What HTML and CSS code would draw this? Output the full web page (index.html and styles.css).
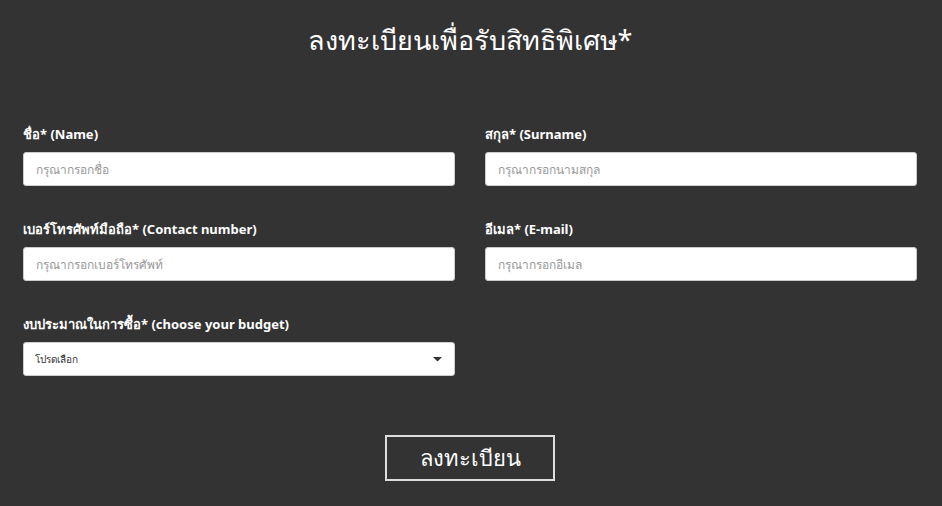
FILE: index.html
```html
<!DOCTYPE html>
<html lang="th">
<head>
<meta charset="utf-8">
<title>ลงทะเบียน</title>
<link rel="stylesheet" href="styles.css">
</head>
<body>
<main class="page">
  <h1 class="title">ลงทะเบียนเพื่อรับสิทธิพิเศษ*</h1>
  <form class="form">
    <div class="grid">
      <div class="field">
        <label class="label">ชื่อ* (Name)</label>
        <input class="input" type="text" placeholder="กรุณากรอกชื่อ">
      </div>
      <div class="field">
        <label class="label">สกุล* (Surname)</label>
        <input class="input" type="text" placeholder="กรุณากรอกนามสกุล">
      </div>
      <div class="field">
        <label class="label">เบอร์โทรศัพท์มือถือ* (Contact number)</label>
        <input class="input" type="text" placeholder="กรุณากรอกเบอร์โทรศัพท์">
      </div>
      <div class="field">
        <label class="label">อีเมล* (E-mail)</label>
        <input class="input" type="text" placeholder="กรุณากรอกอีเมล">
      </div>
      <div class="field">
        <label class="label">งบประมาณในการซื้อ* (choose your budget)</label>
        <div class="select">
          <span class="select-text">โปรดเลือก</span>
          <svg class="caret" width="9" height="5" viewBox="0 0 9 5"><path d="M0 0h9L4.5 4.5z" fill="#333"/></svg>
        </div>
      </div>
    </div>
    <div class="actions">
      <button class="btn" type="button">ลงทะเบียน</button>
    </div>
  </form>
</main>
</body>
</html>
```
FILE: styles.css
```css
html, body {
  margin: 0;
  padding: 0;
  background: #333333;
}
body {
  font-family: "Noto Sans", "DejaVu Sans", sans-serif;
  color: #ffffff;
  height: 506px;
  overflow: hidden;
}
.page {
  width: 894px;
  margin: 0 0 0 23px;
}
.title {
  margin: 0;
  padding-top: 18px;
  height: 44px;
  font-size: 27px;
  font-weight: 400;
  line-height: 44px;
  text-align: center;
}
.form {
  margin-top: 62px;
}
.grid {
  display: grid;
  grid-template-columns: 432px 432px;
  column-gap: 30px;
  row-gap: 33px;
}
.field {
  display: flex;
  flex-direction: column;
}
.label {
  font-size: 13px;
  font-weight: 700;
  line-height: 20px;
  height: 20px;
  margin-bottom: 8px;
}
.input, .select {
  box-sizing: border-box;
  height: 34px;
  width: 432px;
  border: 1px solid #cccccc;
  border-radius: 3px;
  background: #ffffff;
  padding: 0 12px;
  font-family: inherit;
  font-size: 12px;
  color: #333;
}
.input::placeholder {
  color: #999999;
}
.select {
  display: flex;
  align-items: center;
  justify-content: space-between;
  padding: 0 12px 0 11px;
}
.select-text {
  font-size: 10px;
  color: #333;
}
.actions {
  display: flex;
  justify-content: center;
  margin-top: 59px;
}
.btn {
  box-sizing: border-box;
  width: 170px;
  height: 46px;
  background: transparent;
  border: 2px solid #dddddd;
  color: #ffffff;
  font-family: inherit;
  font-size: 22px;
  padding: 0;
}
```
